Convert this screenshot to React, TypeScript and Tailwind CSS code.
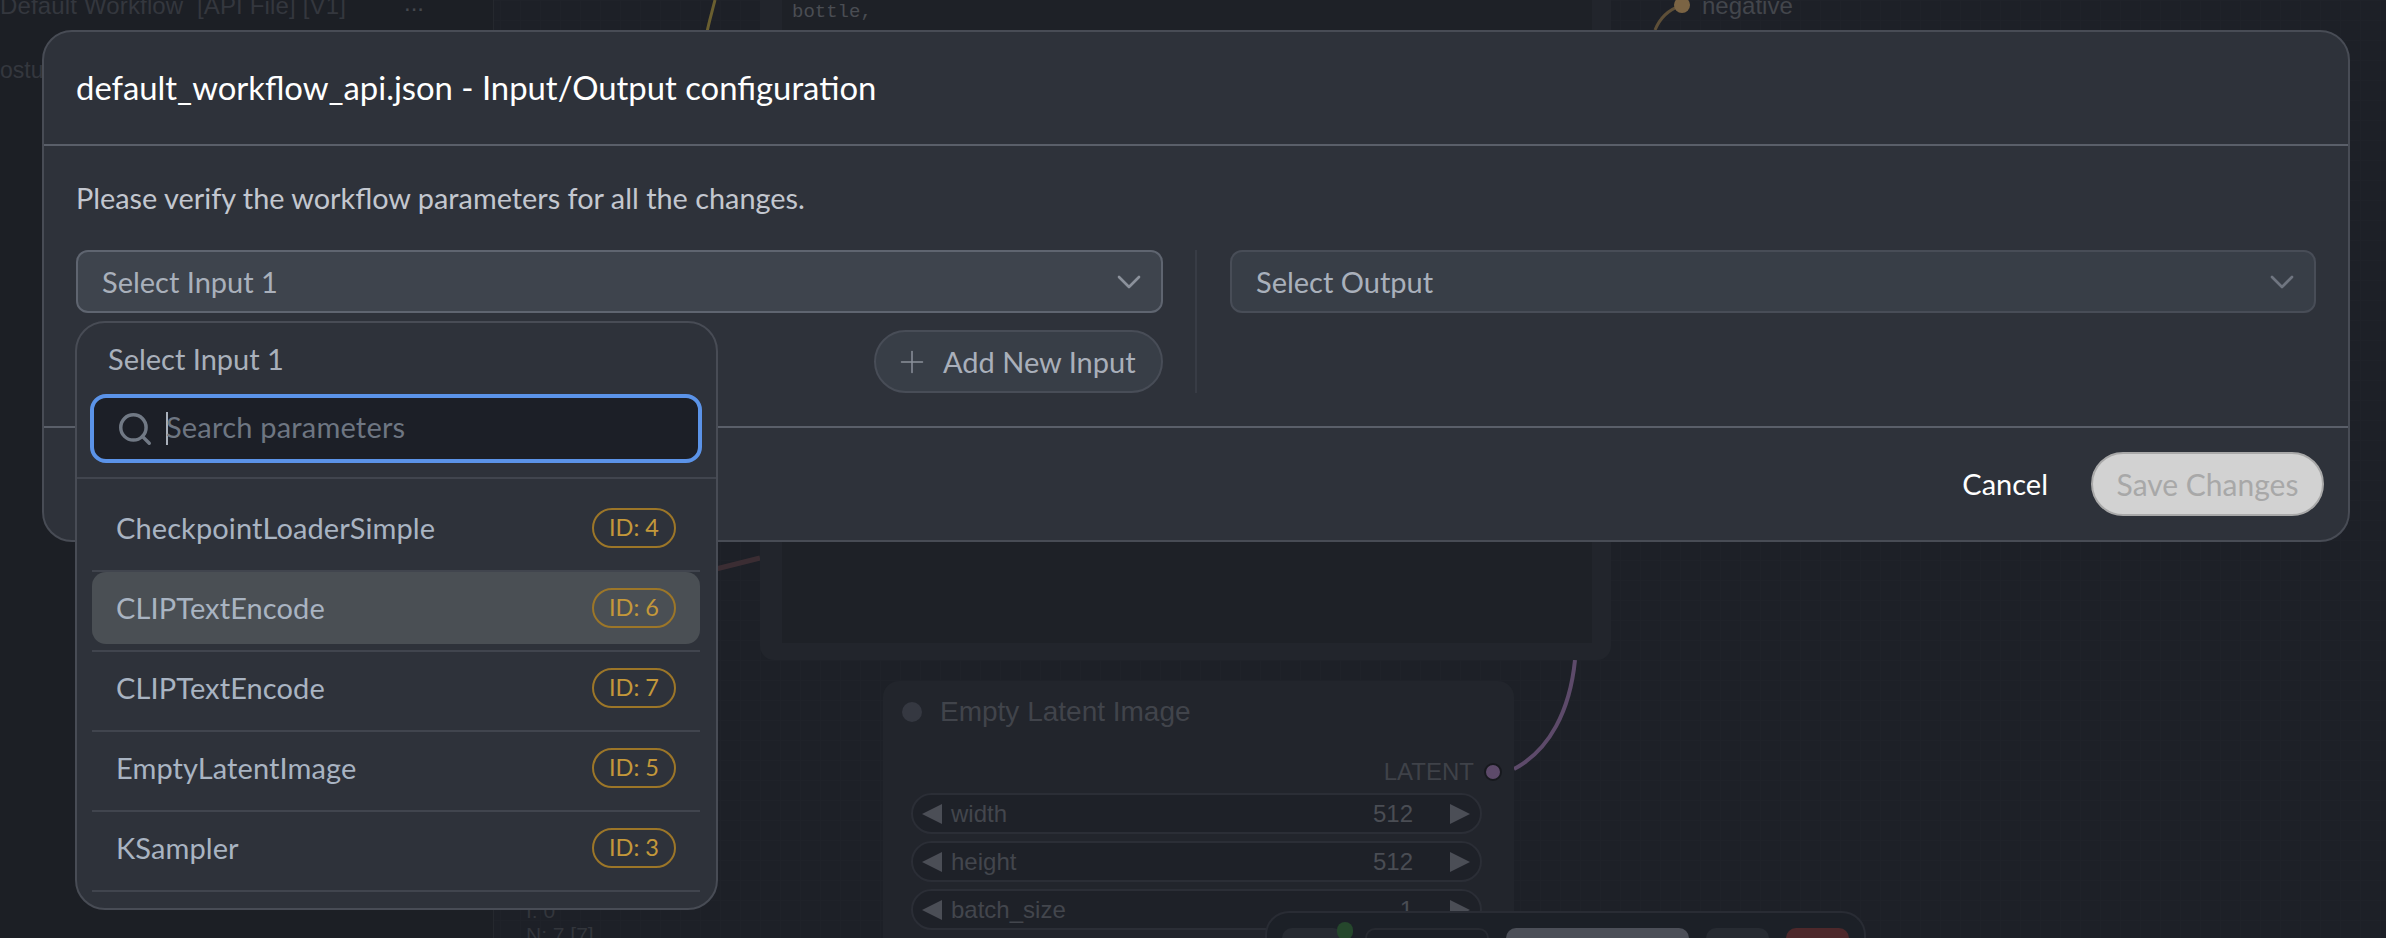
import { ChevronDown, Plus, Search } from "lucide-react";

const ui = "font-['Lato','Noto_Sans',sans-serif]";
const node = "font-['Liberation_Sans',Arial,sans-serif]";

const params = [
  { name: "CheckpointLoaderSimple", id: 4 },
  { name: "CLIPTextEncode", id: 6, active: true },
  { name: "CLIPTextEncode", id: 7 },
  { name: "EmptyLatentImage", id: 5 },
  { name: "KSampler", id: 3 },
];

function Widget({ label, value }: { label: string; value: string }) {
  return (
    <div className="flex h-[41px] items-center rounded-full border-2 border-[#2b2e36] bg-[#1e2128] pl-[9px] pr-[10px] text-[24px] text-[#43464d]">
      <span className="h-0 w-0 border-y-[10px] border-r-[20px] border-y-transparent border-r-[#4b4e56]" />
      <span className="ml-[9px] flex-1">{label}</span>
      <span className="mr-[37px] text-[#4a4d54]">{value}</span>
      <span className="h-0 w-0 border-y-[10px] border-l-[20px] border-y-transparent border-l-[#4b4e56]" />
    </div>
  );
}

function Canvas() {
  return (
    <div className={`absolute inset-0 bg-[#1d2027] ${node}`}>
      <div className="absolute inset-0 bg-[linear-gradient(#22252b_1px,transparent_1px),linear-gradient(90deg,#22252b_1px,transparent_1px)] bg-[size:20px_20px] opacity-50" />

      {/* side panel */}
      <div className="absolute left-0 top-0 h-[938px] w-[494px] border-r border-[#25282e] bg-[#1c1f25]">
        <div className="absolute -top-[8px] left-0 whitespace-nowrap text-[24px] leading-[28px] tracking-[0.15px] text-[#34373e]">Default Workflow&nbsp; [API File] [V1]</div>
        <div className="absolute -top-[11px] left-[404px] text-[24px] leading-[28px] text-[#45484e]">...</div>
        <div className="absolute left-0 top-[57px] text-[23px] leading-[26px] text-[#34373e]">ostu</div>
        <div className="absolute left-[526px] top-[898px] whitespace-nowrap text-[21px] leading-[26px] text-[#33363c]">I: 0</div>
        <div className="absolute left-[526px] top-[922px] whitespace-nowrap text-[21px] leading-[26px] text-[#33363c]">N: 7 [7]</div>
      </div>

      {/* wires */}
      <svg className="absolute inset-0" width="2386" height="938" fill="none">
        <path d="M715 0C712 12 709 22 707 32" stroke="#6a5f30" strokeWidth="3" />
        <path d="M1655 30C1660 18 1668 10 1680 6" stroke="#5e4f38" strokeWidth="3" />
        <path d="M716 569L760 558" stroke="#3b2d33" strokeWidth="5" />
        <path d="M1575 660C1570 710 1550 750 1514 769" stroke="#5d4a6a" strokeWidth="4" />
        <ellipse cx="1682" cy="5" rx="8" ry="8" fill="#7b6444" />
      </svg>
      <div className="absolute left-[1702px] -top-[8px] text-[24px] leading-[28px] text-[#43464c]">negative</div>

      {/* prompt node */}
      <div className="absolute left-[760px] top-0 flex h-[660px] w-[851px] rounded-b-[14px] bg-[#22252c] pb-[17px] pl-[22px] pr-[19px]">
        <div className="flex-1 bg-[#1e2127] pl-[10px] font-['Liberation_Mono',monospace] text-[19px] leading-[24px] text-[#4a4d53]">bottle,</div>
      </div>

      {/* latent node */}
      <div className="absolute left-[883px] top-[681px] h-[257px] w-[631px] rounded-t-[16px] bg-[#22252c]">
        <div className="flex h-[62px] items-center gap-[18px] pl-[19px] text-[28px] text-[#41444b]">
          <span className="h-[20px] w-[20px] rounded-full bg-[#353841]" />
          <span>Empty Latent Image</span>
        </div>
        <div className="flex items-center justify-end gap-[10px] pr-[12px] pt-[15px] text-[24px] leading-[28px] text-[#3f4249]">
          <span>LATENT</span>
          <span className="h-[18px] w-[18px] rounded-full border-2 border-[#17191e] bg-[#5d4a6a]" />
        </div>
        <div className="ml-[28px] mr-[32px] mt-[7px] flex flex-col gap-[7px]">
          <Widget label="width" value="512" />
          <Widget label="height" value="512" />
          <Widget label="batch_size" value="1" />
        </div>
      </div>

      {/* floating toolbar */}
      <div className="absolute left-[1265px] top-[911px] flex h-[27px] w-[601px] items-start gap-[17px] rounded-t-[24px] border-x-2 border-t-2 border-[#292c34] bg-[#1c2027] pl-[15px] pt-[15px]">
        <div className="relative h-[12px] w-[61px] rounded-t-[10px] bg-[#272b32]">
          <span className="absolute -right-[10px] -top-[6px] h-[18px] w-[16px] rounded-full bg-[#25472c]" />
        </div>
        <div className="ml-[5px] h-[12px] w-[124px] rounded-t-[10px] border-x-2 border-t-2 border-[#272a31]" />
        <div className="h-[12px] w-[183px] rounded-t-[10px] bg-[#4c4f58]" />
        <div className="h-[12px] w-[63px] rounded-t-[10px] bg-[#272b32]" />
        <div className="h-[12px] w-[63px] rounded-t-[10px] bg-[#4d282b]" />
      </div>
    </div>
  );
}

function SelectBox({ label, active }: { label: string; active?: boolean }) {
  return (
    <div
      className={`flex h-[63px] items-center justify-between rounded-[12px] border-2 pl-[24px] pr-[22px] text-[29px] ${
        active ? "border-[#5f6570] bg-[#3e444d] text-[#a9b0bb]" : "border-[#484d57] bg-[#383e47] text-[#a9b0bb]"
      }`}
    >
      <span>{label}</span>
      <ChevronDown size={40} strokeWidth={1.6} className={active ? "-mr-[10px] text-[#8b919b]" : "-mr-[10px] text-[#6f7580]"} />
    </div>
  );
}

function Dropdown() {
  return (
    <div className="absolute left-[31px] top-[289px] h-[589px] w-[643px] rounded-[30px] border-2 border-[#484c55] bg-[#2e323a]">
      <div className="flex h-[71px] items-center pl-[31px] text-[29px] text-[#a9b0bb]">Select Input 1</div>
      <div className="ml-[13px] mr-[14px] flex h-[69px] items-center rounded-[16px] border-[4px] border-[#5b93e8] bg-[#1c1f27] pl-[22px]">
        <Search size={38} strokeWidth={2.2} className="shrink-0 text-[#717985]" />
        <span className="ml-[12px] h-[33px] w-[2px] bg-[#a9b0bb]" />
        <span className="-ml-[2px] -mt-[3px] text-[29px] tracking-[0.2px] text-[#6e7682]">Search parameters</span>
      </div>
      <div className="mt-[14px] border-t-2 border-[#41454e] pl-[15px] pr-[16px] pt-[13px]">
        {params.map((p) => (
          <div key={p.id} className="mb-0 border-b-2 border-[#41454e] pb-[6px]">
            <div
              className={`flex h-[72px] items-center justify-between rounded-[14px] pl-[24px] pr-[24px] text-[29px] tracking-[0.1px] text-[#a9b4c2] ${
                p.active ? "bg-[#4a4f54]" : ""
              }`}
            >
              <span>{p.name}</span>
              <span className="flex h-[40px] w-[84px] items-center justify-center rounded-full border-2 border-[#9c7628] text-[23.5px] tracking-normal text-[#c4983a]">
                ID: {p.id}
              </span>
            </div>
          </div>
        ))}
      </div>
    </div>
  );
}

export default function App() {
  return (
    <div className="relative h-[938px] w-[2386px] overflow-hidden bg-[#1d2027]">
      <Canvas />
      <div className={`absolute left-[42px] top-[30px] flex h-[512px] w-[2308px] flex-col rounded-[30px] border-2 border-[#484c55] bg-[#2e323a] ${ui}`}>
        <div className="flex h-[114px] items-center border-b-2 border-[#5a5f69] pl-[32px] text-[32.85px] text-white">
          default_workflow_api.json - Input/Output configuration
        </div>
        <div className="flex flex-1 flex-col px-[32px] pt-[32px]">
          <p className="h-[40px] text-[28.85px] leading-[40px] text-[#c3c7cf]">Please verify the workflow parameters for all the changes.</p>
          <div className="mt-[32px] flex h-[143px]">
            <div className="flex w-[1087px] flex-col">
              <SelectBox label="Select Input 1" active />
              <button className="mt-[17px] flex h-[63px] w-[289px] items-center self-end rounded-full border-2 border-[#484d57] bg-[#383e47] pl-[18px] text-[29px] text-[#a9afba]">
                <Plus size={36} strokeWidth={1} className="shrink-0 text-[#8b919b]" />
                <span className="ml-[13px]">Add New Input</span>
              </button>
            </div>
            <div className="ml-[32px] mr-[33px] w-[2px] bg-[#383c45]" />
            <div className="flex-1">
              <SelectBox label="Select Output" />
            </div>
          </div>
        </div>
        <div className="flex h-[114px] items-center justify-end gap-[43px] border-t-2 border-[#5a5f69] pr-[24px]">
          <span className="text-[29px] text-white">Cancel</span>
          <button className="h-[64px] w-[233px] rounded-full border-2 border-[#a9a9a9] bg-[#d2d2d2] text-[30px] text-[#a8a8a8]">Save Changes</button>
        </div>
        <Dropdown />
      </div>
    </div>
  );
}
